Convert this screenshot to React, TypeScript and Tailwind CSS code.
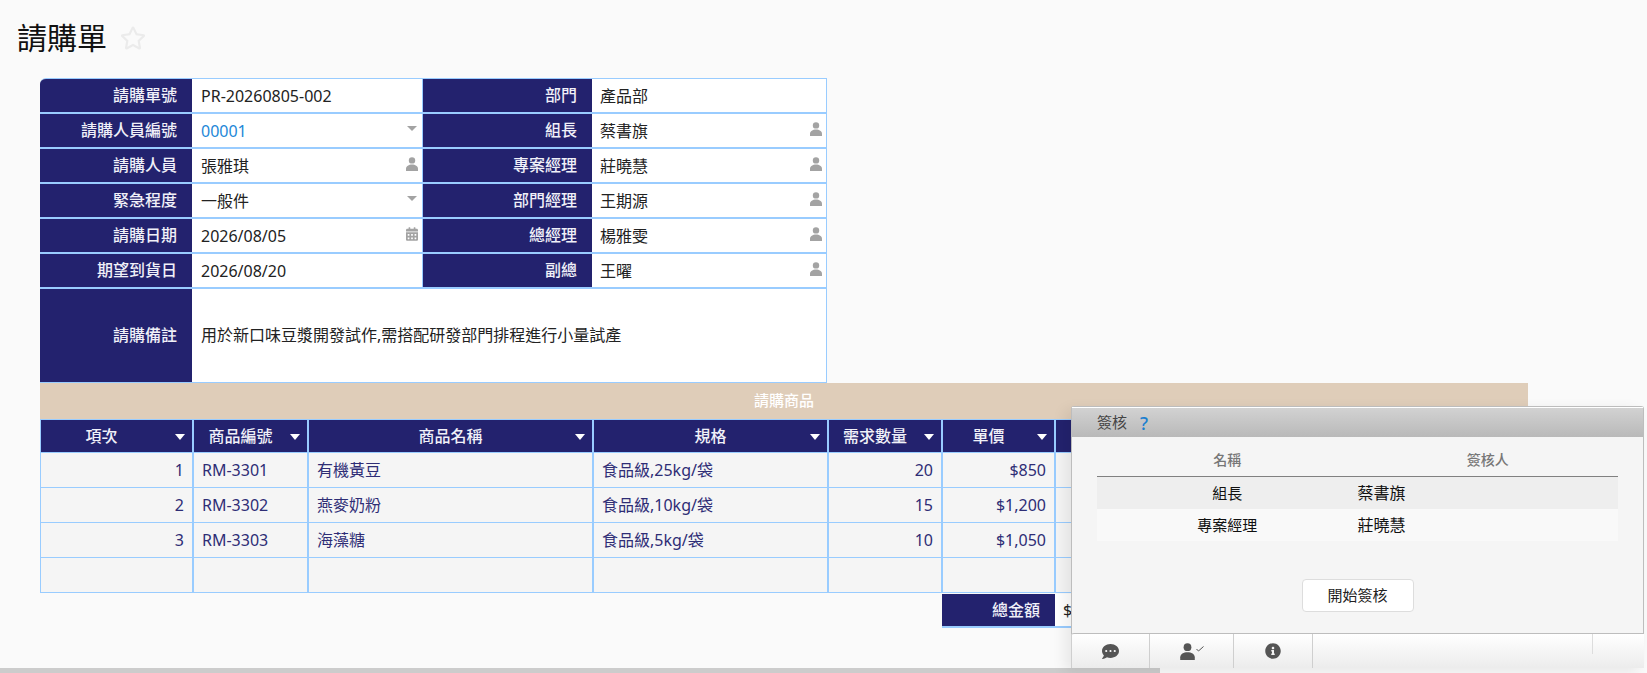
import { FaCalendarAlt, FaCommentDots, FaInfoCircle, FaRegStar } from "react-icons/fa";

const fontStack = "font-['Noto_Sans','Noto_Sans_CJK_TC',sans-serif]";

function UserIcon({ className }: { className?: string }) {
    return (
        <svg viewBox="0 0 12 14" className={className} fill="currentColor">
            <circle cx="6" cy="3.4" r="3.2" />
            <path d="M0 14v-2.2C0 9.2 2.8 7.6 6 7.6s6 1.6 6 4.2V14z" />
        </svg>
    );
}

function Caret() {
    return <span className="w-0 h-0 border-x-[5px] border-x-transparent border-t-[5px] border-t-[#a3a3a3]" />;
}

type Icon = "user" | "caret" | "date";

function FormIcon({ icon }: { icon?: Icon }) {
    if (icon === "user") return <UserIcon className="w-3 h-3.5 text-[#a3a3a3] mb-1" />;
    if (icon === "caret") return <span className="flex mb-1 mr-px"><Caret /></span>;
    if (icon === "date") return <FaCalendarAlt className="w-3 h-3.5 text-[#a3a3a3] mb-1" />;
    return null;
}

function FormRow({
    left,
    right,
}: {
    left: { label: string; value: string; icon?: Icon; link?: boolean };
    right: { label: string; value: string; icon?: Icon };
}) {
    return (
        <div className="flex h-[35px] border-b-2 border-[#99ccff]">
            <div className="w-[152px] bg-[#23226e] text-[#f0f0f8] font-medium text-right pr-[15px] leading-[32px]">{left.label}</div>
            <div className="w-[230px] bg-white flex items-center justify-between pl-2 pr-[4px] border-l border-white">
                <span className={left.link ? "text-[#1e88d8]" : "text-[#222]"}>{left.value}</span>
                <FormIcon icon={left.icon} />
            </div>
            <div className="w-[170px] bg-[#23226e] border-l border-[#99ccff] text-[#f0f0f8] font-medium text-right pr-[15px] leading-[32px]">{right.label}</div>
            <div className="flex-1 bg-white flex items-center justify-between pl-2 pr-[4px]">
                <span className="text-[#222]">{right.value}</span>
                <FormIcon icon={right.icon} />
            </div>
        </div>
    );
}

const formRows = [
    { left: { label: "請購單號", value: "PR-20260805-002" }, right: { label: "部門", value: "產品部" } },
    { left: { label: "請購人員編號", value: "00001", icon: "caret" as Icon, link: true }, right: { label: "組長", value: "蔡書旗", icon: "user" as Icon } },
    { left: { label: "請購人員", value: "張雅琪", icon: "user" as Icon }, right: { label: "專案經理", value: "莊曉慧", icon: "user" as Icon } },
    { left: { label: "緊急程度", value: "一般件", icon: "caret" as Icon }, right: { label: "部門經理", value: "王期源", icon: "user" as Icon } },
    { left: { label: "請購日期", value: "2026/08/05", icon: "date" as Icon }, right: { label: "總經理", value: "楊雅雯", icon: "user" as Icon } },
    { left: { label: "期望到貨日", value: "2026/08/20" }, right: { label: "副總", value: "王曜", icon: "user" as Icon } },
];

const columns = [
    { title: "項次", width: "w-[153px]", pad: "pr-[30px]" },
    { title: "商品編號", width: "w-[115px]", pad: "pr-[20px]" },
    { title: "商品名稱", width: "w-[285px]", pad: "" },
    { title: "規格", width: "w-[235px]", pad: "" },
    { title: "需求數量", width: "w-[114px]", pad: "pr-[20px]" },
    { title: "單價", width: "w-[113px]", pad: "pr-[20px]" },
    { title: "", width: "w-[473px]", pad: "" },
];

const items = [
    ["1", "RM-3301", "有機黃豆", "食品級,25kg/袋", "20", "$850", ""],
    ["2", "RM-3302", "燕麥奶粉", "食品級,10kg/袋", "15", "$1,200", ""],
    ["3", "RM-3303", "海藻糖", "食品級,5kg/袋", "10", "$1,050", ""],
    ["", "", "", "", "", "", ""],
];

const rightAligned = [0, 4, 5];

export default function App() {
    return (
        <div className={`w-[1647px] h-[673px] relative overflow-hidden bg-[#fafafa] flex flex-col text-base ${fontStack}`}>
            <div className="flex-1 min-h-0 overflow-hidden">
                <div className="flex items-center gap-[13px] pl-[17px] h-[78px] pb-[2px]">
                    <h1 className="text-[30px] leading-none text-[#111]">請購單</h1>
                    <FaRegStar className="w-[26px] h-[26px] text-[#ebebeb]" />
                </div>

                {/* form */}
                <div className="ml-[40px] w-[787px] border-t border-r border-[#99ccff] rounded-tl-md overflow-hidden">
                    {formRows.map((row) => (
                        <FormRow key={row.left.label} left={row.left} right={row.right} />
                    ))}
                    <div className="flex h-[94px] border-b border-[#99ccff]">
                        <div className="w-[152px] bg-[#23226e] text-[#f0f0f8] font-medium text-right pr-[15px] flex items-center justify-end pb-[2px]">請購備註</div>
                        <div className="flex-1 bg-white flex items-center pl-[9px] pb-[2px] text-[#222]">用於新口味豆漿開發試作,需搭配研發部門排程進行小量試產</div>
                    </div>
                </div>

                {/* line items */}
                <div className="ml-[40px] w-[1488px]">
                    <div className="h-[36px] bg-[#dfcdb9] text-white font-medium text-center leading-[34px] text-[15px] pr-[-1px]">請購商品</div>
                    <div className="flex h-[34px]">
                        {columns.map((col, i) => (
                            <div key={i} className={`${col.width} bg-[#23226e] border border-[#99ccff] relative text-[#f0f0f8] font-medium flex items-center justify-center ${col.pad}`}>
                                {col.title}
                                {col.title && <span className="absolute right-[7px] top-[14px] w-0 h-0 border-x-[5.5px] border-x-transparent border-t-[6px] border-t-white" />}
                            </div>
                        ))}
                    </div>
                    {items.map((row, r) => (
                        <div key={r} className="flex h-[35px]">
                            {row.map((cell, i) => (
                                <div
                                    key={i}
                                    className={`${columns[i].width} bg-[#f5f5f5] border-x border-b border-[#99ccff] flex items-center px-2 text-[#2e2d75] ${rightAligned.includes(i) ? "justify-end" : ""}`}
                                >
                                    {cell}
                                </div>
                            ))}
                        </div>
                    ))}
                    <div className="flex h-[34px] mt-px ml-[902px]">
                        <div className="w-[113px] bg-[#23226e] border-b-2 border-[#99ccff] text-[#f0f0f8] font-medium text-right pr-[15px] leading-[32px]">總金額</div>
                        <div className="flex-1 bg-white border-b-2 border-[#99ccff] pl-2 leading-[32px] text-[#222]">$</div>
                    </div>
                </div>
            </div>

            {/* horizontal scrollbar */}
            <div className="h-[5px] bg-[#fafafa] shrink-0">
                <div className="w-[1160px] h-full bg-[#cccccc]" />
            </div>

            {/* sign-off panel */}
            <div className="absolute left-[1071px] top-[406px] w-[573px] h-[262px] flex flex-col bg-[#f5f5f5] border border-b-0 border-[#bdbdbd] rounded-t-[3px] shadow-[-6px_4px_14px_rgba(0,0,0,0.08)] text-[15px]">
                <div className="h-[30px] shrink-0 border-t border-white bg-gradient-to-b from-[#d2d2d2] to-[#b9b9b9] flex items-center pl-[25px] gap-[13px]">
                    <span className="text-[#444]">簽核</span>
                    <span className="text-[#1a7fd0] text-lg font-medium leading-none">?</span>
                </div>
                <div className="flex-1 px-[25px]">
                    <div className="flex h-[40px] items-center border-b border-[#808080] text-[14px] font-medium text-[#777] pt-[6px]">
                        <div className="w-1/2 text-center">名稱</div>
                        <div className="w-1/2 text-center">簽核人</div>
                    </div>
                    <div className="flex h-[32px] items-center bg-[#eeeeee] text-[#111]">
                        <div className="w-1/2 text-center">組長</div>
                        <div className="w-1/2 text-base">蔡書旗</div>
                    </div>
                    <div className="flex h-[32px] items-center bg-[#f9f9f9] text-[#111]">
                        <div className="w-1/2 text-center">專案經理</div>
                        <div className="w-1/2 text-base">莊曉慧</div>
                    </div>
                    <div className="flex justify-center mt-[38px]">
                        <button className="w-[112px] h-[33px] bg-white border border-[#dddddd] rounded text-[#222]">開始簽核</button>
                    </div>
                </div>
                <div className="h-[35px] shrink-0 -mx-px border-t border-[#bdbdbd] rounded-tl-[3px] bg-gradient-to-b from-white to-[#ececec] flex text-[#555]">
                    <div className="w-[79px] border-x border-[#cfcfcf] flex items-center justify-center"><FaCommentDots className="w-[17px] h-[17px]" /></div>
                    <div className="w-[84px] border-r border-[#cfcfcf] flex items-center justify-center">
                        <UserIcon className="w-[15px] h-[17px]" />
                        <svg viewBox="0 0 8 6" className="w-[8px] h-[6px] ml-px mb-1" fill="none" stroke="currentColor" strokeWidth="1"><path d="M0.5 3l2 2 5-4.5" /></svg>
                    </div>
                    <div className="w-[79px] border-r border-[#cfcfcf] flex items-center justify-center"><FaInfoCircle className="w-4 h-4" /></div>
                    <div className="w-[280px] border-r border-[#dddddd] h-[20px]" />
                </div>
            </div>
        </div>
    );
}
